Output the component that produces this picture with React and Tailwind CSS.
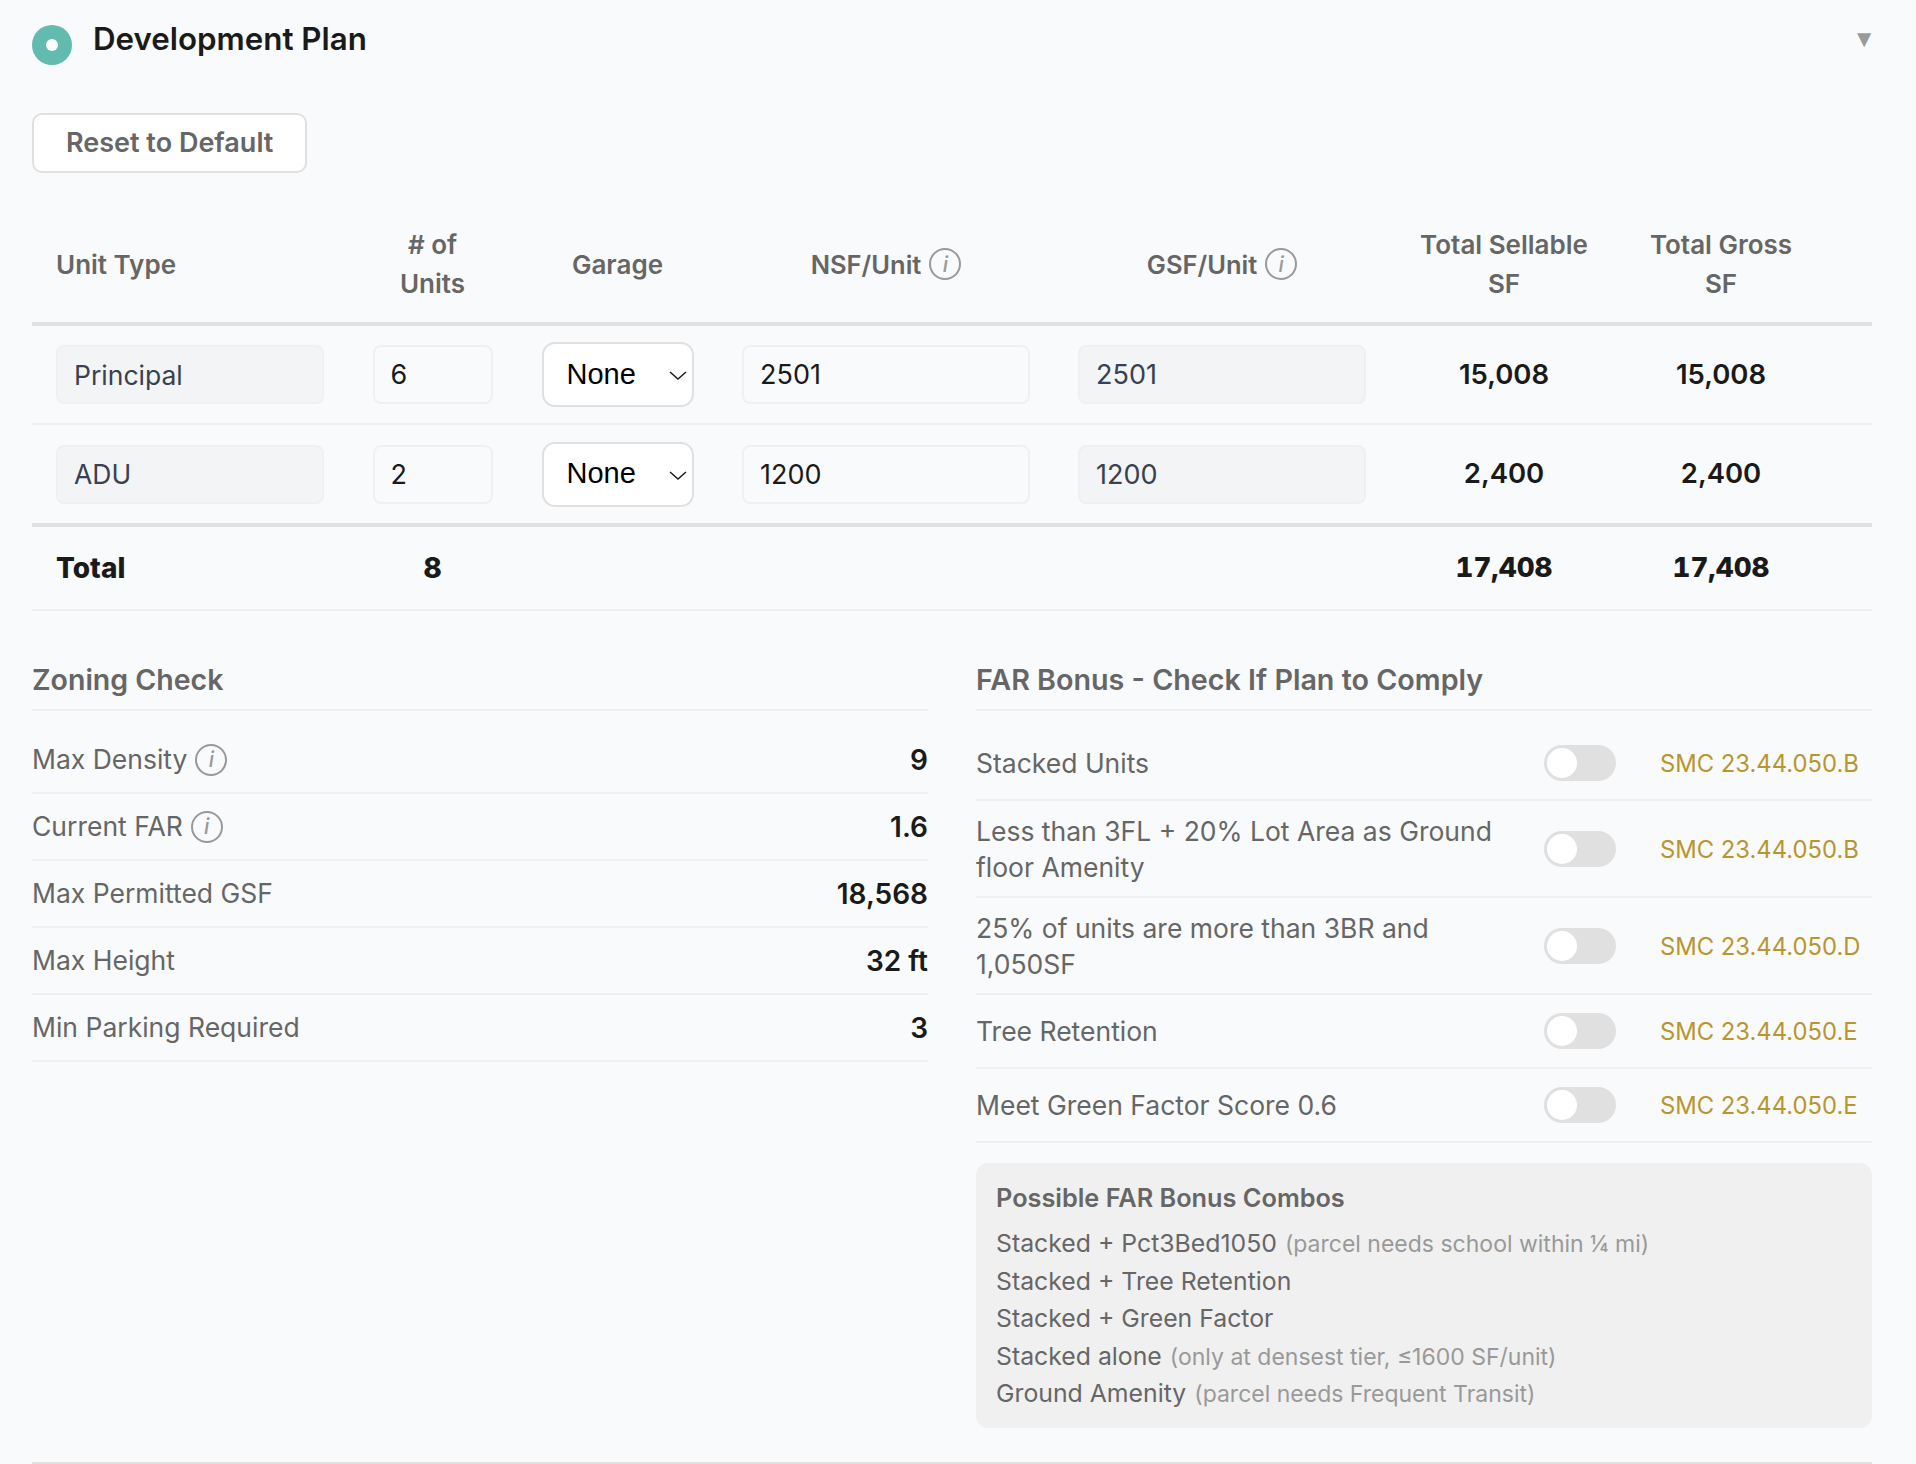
import React from "react";

function Info() {
  return (
    <span className="inline-flex h-[32px] w-[32px] shrink-0 items-center justify-center rounded-full border-[2.5px] border-[#999999] text-[21px] font-medium italic leading-none text-[#999999]">
      i
    </span>
  );
}

function TextBox({ value, muted, className }) {
  return (
    <input
      readOnly
      value={value}
      className={`block h-[59px] rounded-lg border-2 px-4 outline-none ${
        muted ? "border-[#f0f0f0] bg-[#f3f4f6] text-[#374151]" : "border-[#f0f0f0] bg-transparent text-[#1a1a1a]"
      } ${className}`}
    />
  );
}

function GarageSelect() {
  return (
    <div className="relative mx-auto h-[65px] w-[152px]">
      <select
        defaultValue="None"
        className="h-full w-full appearance-none rounded-[13px] border-2 border-[#e0e0e0] bg-white pl-[23px] font-['Liberation_Sans',sans-serif] text-[29px] text-black outline-none"
      >
        <option>None</option>
        <option>1 Car</option>
        <option>2 Car</option>
      </select>
      <svg
        className="pointer-events-none absolute right-[7px] top-[29px] h-[9px] w-[18px]"
        viewBox="0 0 18 9"
        fill="none"
        stroke="#1a1a1a"
        strokeWidth="1.5"
      >
        <path d="M1 1l8 7 8-7" />
      </svg>
    </div>
  );
}

function UnitRow({ name, count, nsf, sellable, gross, last }) {
  return (
    <tr className={last ? "" : "border-b-2 border-[#f0f0f0]"}>
      <td className={`pl-6 pr-6 ${last ? "h-[101px]" : "h-[100px]"}`}>
        <TextBox value={name} muted className="w-[268px] text-[26.5px]" />
      </td>
      <td>
        <TextBox value={count} className="mx-auto w-[120px] text-[27px]" />
      </td>
      <td>
        <GarageSelect />
      </td>
      <td>
        <TextBox value={nsf} className="mx-auto w-[288px] text-[27px]" />
      </td>
      <td>
        <TextBox value={nsf} muted className="mx-auto w-[288px] text-[27px]" />
      </td>
      <td className="text-center text-[27.5px] font-semibold text-[#1a1a1a]">{sellable}</td>
      <td className="text-center text-[27.5px] font-semibold text-[#1a1a1a]">{gross}</td>
      <td />
    </tr>
  );
}

function Head({ children, left }) {
  return (
    <th className={`pb-[19px] pt-5 align-middle text-[26px] font-semibold leading-[39px] text-[#666666] ${left ? "pl-6 text-left" : "text-center"}`}>
      {children}
    </th>
  );
}

function ZoneRow({ label, value, info }) {
  return (
    <div className="flex h-[67px] items-center justify-between border-b-2 border-[#f0f0f0] text-[26.5px] text-[#666666]">
      <span className="flex items-center gap-2">
        {label}
        {info && <Info />}
      </span>
      <span className="text-[28px] font-semibold text-[#1a1a1a]">{value}</span>
    </div>
  );
}

function BonusRow({ label, code }) {
  return (
    <div className="flex min-h-[74px] items-center border-b-2 border-[#f0f0f0] py-[11.5px]">
      <span className="flex-1 pr-10 text-[26.5px] leading-[36px] text-[#666666]">{label}</span>
      <span className="relative h-9 w-[72px] shrink-0 rounded-full bg-[#e0e0e0]">
        <span className="absolute left-[3px] top-[3px] h-[30px] w-[30px] rounded-full bg-white" />
      </span>
      <span className="mt-[2px] w-[256px] shrink-0 pl-11 text-[23.8px] text-[#b8962e]">{code}</span>
    </div>
  );
}

function Combo({ text, note }) {
  return (
    <div className="text-[24.8px] leading-[37.6px] text-[#666666]">
      {text}
      {note && <span className="ml-2 text-[23px] leading-none text-[#999999]">{note}</span>}
    </div>
  );
}

export default function App() {
  return (
    <div className="h-[1464px] overflow-hidden bg-[#f9fafb] pl-8 pr-[44px] font-['Inter',sans-serif]">
      <div className="h-[1464px] border-b-2 border-[#e0e0e0]">
        <header className="flex items-start pt-[18px]">
          <span className="mt-[7px] flex h-10 w-10 items-center justify-center rounded-full bg-[#61bbaf]">
            <span className="h-3 w-3 rounded-full bg-white" />
          </span>
          <h2 className="ml-[21px] text-[31.3px] font-semibold leading-[42px] text-[#1a1a1a]">Development Plan</h2>
          <span className="-mr-1 ml-auto mt-[9px] font-['Liberation_Sans',sans-serif] text-[24px] leading-[24px] text-[#999999]">▼</span>
        </header>

        <button className="mt-[48px] block h-[60px] rounded-[10px] border-2 border-[#e0e0e0] bg-white px-8 text-[27px] font-semibold text-[#666666]">
          Reset to Default
        </button>

        <table className="mt-8 w-full table-fixed border-collapse">
          <colgroup>
            <col className="w-[316px]" />
            <col className="w-[169px]" />
            <col className="w-[201px]" />
            <col className="w-[336px]" />
            <col className="w-[336px]" />
            <col className="w-[228px]" />
            <col className="w-[206px]" />
            <col />
          </colgroup>
          <thead>
            <tr className="border-b-4 border-[#e0e0e0]">
              <Head left>Unit Type</Head>
              <Head>
                # of
                <br />
                Units
              </Head>
              <Head>Garage</Head>
              <Head>
                <span className="inline-flex items-center gap-2 text-[25.5px]">
                  NSF/Unit <Info />
                </span>
              </Head>
              <Head>
                <span className="inline-flex items-center gap-2 text-[25.5px]">
                  GSF/Unit <Info />
                </span>
              </Head>
              <Head>
                Total Sellable
                <br />
                SF
              </Head>
              <Head>
                Total Gross
                <br />
                SF
              </Head>
              <Head />
            </tr>
          </thead>
          <tbody>
            <UnitRow name="Principal" count="6" nsf="2501" sellable="15,008" gross="15,008" />
            <UnitRow name="ADU" count="2" nsf="1200" sellable="2,400" gross="2,400" last />
          </tbody>
          <tfoot>
            <tr className="border-y-4 border-t-[#e0e0e0] border-b-0">
              <td className="h-[84px] pl-6 text-[28px] font-extrabold text-[#1a1a1a]">Total</td>
              <td className="text-center text-[28px] font-extrabold text-[#1a1a1a]">8</td>
              <td colSpan="3" />
              <td className="text-center text-[27.7px] font-extrabold tabular-nums text-[#1a1a1a]">17,408</td>
              <td className="text-center text-[27.7px] font-extrabold tabular-nums text-[#1a1a1a]">17,408</td>
              <td />
            </tr>
          </tfoot>
        </table>
        <div className="h-[2px] bg-[#f0f0f0]" />

        <div className="mt-12 grid grid-cols-2 gap-12">
          <section>
            <h3 className="mb-4 border-b-2 border-[#f0f0f0] pb-2 text-[28.5px] font-semibold leading-[42px] text-[#666666]">Zoning Check</h3>
            <ZoneRow label="Max Density" value="9" info />
            <ZoneRow label="Current FAR" value="1.6" info />
            <ZoneRow label="Max Permitted GSF" value="18,568" />
            <ZoneRow label="Max Height" value="32 ft" />
            <ZoneRow label="Min Parking Required" value="3" />
          </section>
          <section>
            <h3 className="mb-4 border-b-2 border-[#f0f0f0] pb-2 text-[28.7px] font-semibold leading-[42px] text-[#666666]">
              FAR Bonus - Check If Plan to Comply
            </h3>
            <BonusRow label="Stacked Units" code="SMC 23.44.050.B" />
            <BonusRow label="Less than 3FL + 20% Lot Area as Ground floor Amenity" code="SMC 23.44.050.B" />
            <BonusRow label="25% of units are more than 3BR and 1,050SF" code="SMC 23.44.050.D" />
            <BonusRow label="Tree Retention" code="SMC 23.44.050.E" />
            <BonusRow label="Meet Green Factor Score 0.6" code="SMC 23.44.050.E" />
            <div className="mt-5 rounded-xl bg-[#f0f0f0] px-5 pb-[15px] pt-[15px]">
              <div className="mb-2 text-[25.3px] font-semibold leading-[39px] text-[#666666]">Possible FAR Bonus Combos</div>
              <Combo text="Stacked + Pct3Bed1050" note="(parcel needs school within ¼ mi)" />
              <Combo text="Stacked + Tree Retention" />
              <Combo text="Stacked + Green Factor" />
              <Combo text="Stacked alone" note="(only at densest tier, ≤1600 SF/unit)" />
              <Combo text="Ground Amenity" note="(parcel needs Frequent Transit)" />
            </div>
          </section>
        </div>
      </div>
    </div>
  );
}
